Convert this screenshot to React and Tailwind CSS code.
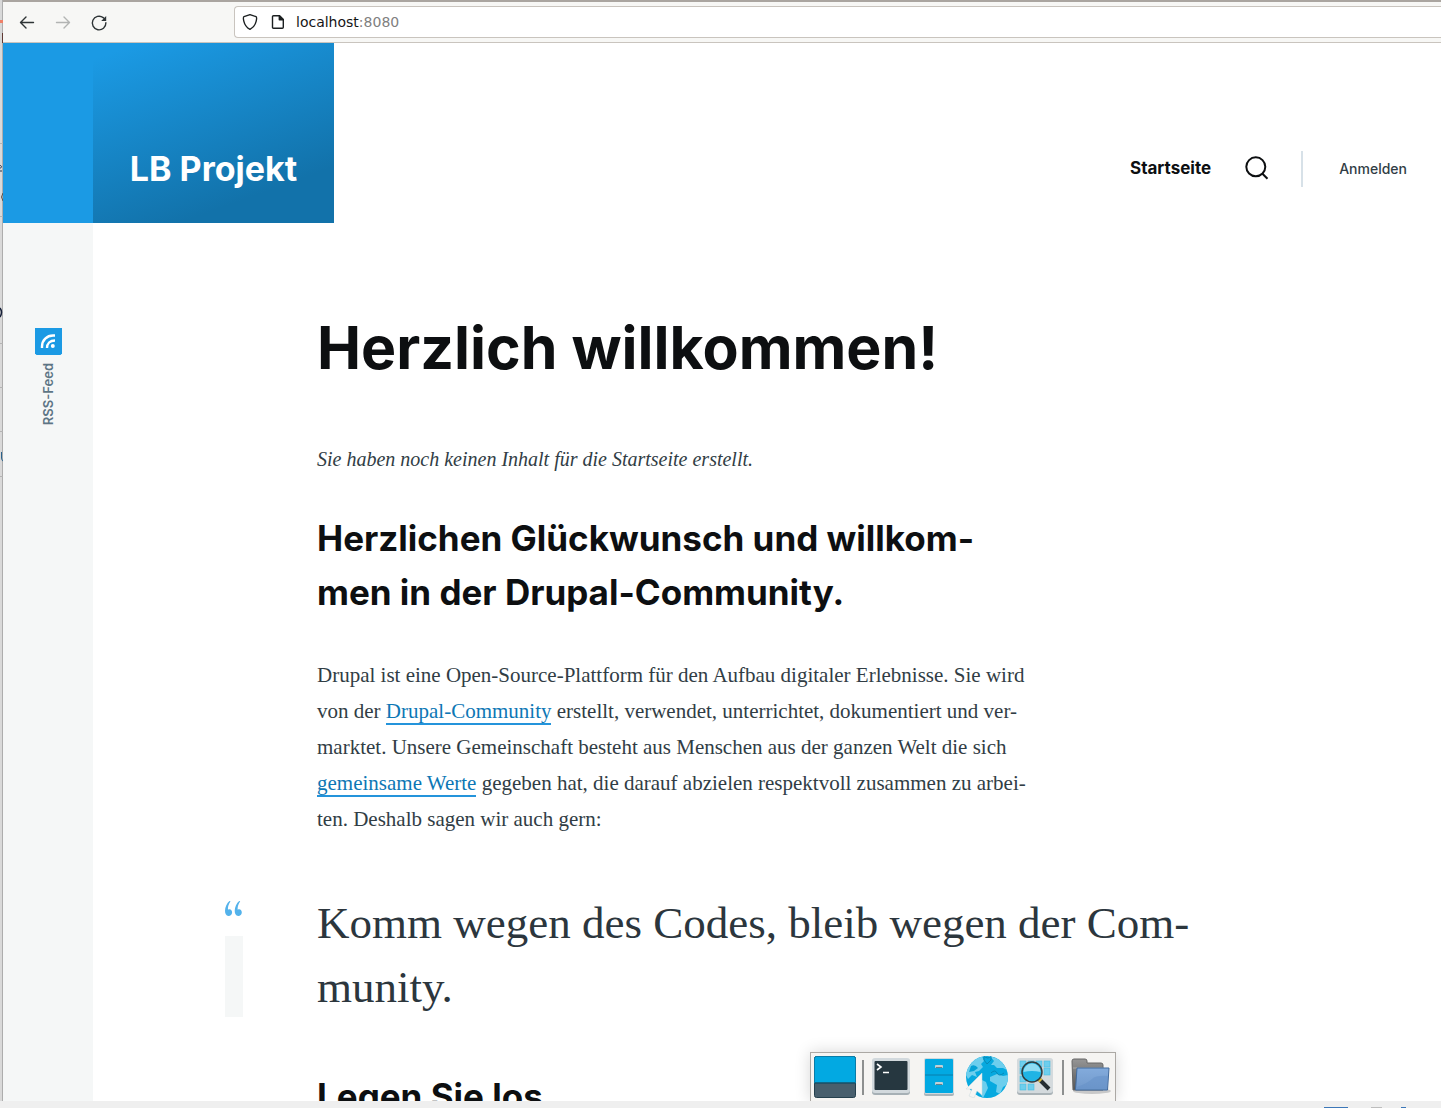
const sans = "font-['Inter','Open_Sans',sans-serif]";
const serif = "font-['Liberation_Serif','DejaVu_Serif',serif]";

function WindowEdge() {
  return (
    <div className="w-[3px] shrink-0 overflow-hidden bg-[#d9d9d9]" aria-hidden="true">
      <svg width="3" height="1108" viewBox="0 0 3 1108">
        <rect x="2" width="1" height="1108" fill="#adadad" />
        <rect y="20" width="3" height="3" fill="#ee8068" />
        <rect x="2" y="33" width="1" height="10" fill="#5f3933" />
        {[143, 216, 343, 387, 431, 476].map((y) => (
          <rect key={y} y={y} width="3" height="1" fill="#b4b4b4" />
        ))}
        <path d="M0 165.500C2 165.500 2 168 0 168M0 171H2" stroke="#25304a" fill="none" />
        <path d="M3 193Q0 197 3 201" stroke="#5c5148" fill="none" />
        <path d="M0 308Q3 312 0 317" stroke="#16213a" strokeWidth="1.500" fill="none" />
        <path d="M1.500 452V458Q2 461 3 461" stroke="#28628c" fill="none" />
      </svg>
    </div>
  );
}

function BrowserBar() {
  return (
    <div className="flex h-[43px] shrink-0 items-center border-t-2 border-b border-t-[#aaa5a0] border-b-[#c9c4be] bg-[#f7f7f5]">
      <div className="flex w-[231px] shrink-0 items-center gap-4 pl-[14px] text-[#2e3436]">
        <button type="button" aria-label="Zurück" className="flex size-5 items-center justify-center">
          <svg width="20" height="20" viewBox="0 0 20 20" fill="none" stroke="currentColor" strokeWidth="1.400" strokeLinecap="round" strokeLinejoin="round">
            <path d="M16.500 10.500H3.500M9 5L3.500 10.500L9 16" />
          </svg>
        </button>
        <button type="button" aria-label="Vor" className="flex size-5 items-center justify-center text-[#b2b4b3]">
          <svg width="20" height="20" viewBox="0 0 20 20" fill="none" stroke="currentColor" strokeWidth="1.400" strokeLinecap="round" strokeLinejoin="round">
            <path d="M3.500 10.500H16.500M11 5L16.500 10.500L11 16" />
          </svg>
        </button>
        <button type="button" aria-label="Neu laden" className="flex size-5 items-center justify-center">
          <svg width="20" height="20" viewBox="0 0 20 20" fill="none" stroke="currentColor" strokeWidth="1.400" strokeLinecap="round">
            <path d="M16.900 10.800A6.800 6.800 0 1 1 14.200 5.600L15.200 6.500" />
            <path d="M17.200 4V9H12.200Z" fill="currentColor" stroke="none" />
          </svg>
        </button>
      </div>
      <div className="flex h-8 min-w-0 flex-1 items-center rounded-l border border-r-0 border-[#c9c4be] bg-white pl-[7px]">
        <svg width="16" height="18" viewBox="0 0 16 18" fill="none" stroke="#1b1f20" strokeWidth="1.400" strokeLinejoin="round" className="shrink-0">
          <path d="M8 1.600L14 3.700C15 4.100 14.700 6 14.200 8.200C13.300 12 11.300 14.700 8 16.400C4.700 14.700 2.700 12 1.800 8.200C1.300 6 1 4.100 2 3.700Z" />
        </svg>
        <svg width="14" height="16" viewBox="0 0 14 16" fill="none" stroke="#1b1f20" strokeWidth="1.400" strokeLinejoin="round" className="ml-[13px] shrink-0">
          <path d="M2.500 1.700H8.500L12.300 5.500V13.300Q12.300 14.300 11.300 14.300H2.500Q1.500 14.300 1.500 13.300V2.700Q1.500 1.700 2.500 1.700Z" />
          <path d="M8.300 1.700V5.700H12.300Z" fill="#1b1f20" />
        </svg>
        <div className="relative ml-[11px] h-full min-w-0 flex-1 font-['DejaVu_Sans',sans-serif] text-sm text-[#808080]">
          <span className="pointer-events-none absolute inset-0 flex items-center" aria-hidden="true">
            <span className="text-[#151515]">localhost</span>:8080
          </span>
          <input aria-label="Adresse" defaultValue="localhost:8080" className="h-full w-full bg-transparent text-transparent caret-black outline-none" />
        </div>
      </div>
    </div>
  );
}

function Rail() {
  return (
    <aside className="flex w-[90px] shrink-0 flex-col bg-[#f5f7f7]">
      <div className="h-[180px] shrink-0 bg-[#1b9ae4]" />
      <a href="#rss" className={`${sans} mt-[105px] flex flex-col items-center gap-2 text-[13px] font-semibold text-[#5d7585]`}>
        <svg width="27" height="27" viewBox="0 0 27 27" aria-hidden="true">
          <path d="M0 0H27V25.500L25.500 27H1.500L0 25.500Z" fill="#1b9ae4" />
          <path d="M7 20V18.500C7 12 12 7.500 18 7.500H20M12 20C12 15.500 15 12.500 20 12.500" stroke="#fff" strokeWidth="2.400" fill="none" />
          <circle cx="17.800" cy="18" r="2" fill="#fff" />
        </svg>
        <span className="rotate-180 leading-4 [writing-mode:vertical-rl]">RSS-Feed</span>
      </a>
    </aside>
  );
}

function SiteHeader() {
  return (
    <header className={`${sans} flex h-[180px] shrink-0 justify-between`}>
      <div className="flex w-[241px] shrink-0 items-end justify-center bg-[linear-gradient(160deg,#1b9ae4_6%,#1272aa_79%)] pb-9">
        <a href="#home" className="text-[34px] leading-9 font-bold whitespace-nowrap text-white">LB Projekt</a>
      </div>
      <nav className="mb-9 flex h-9 items-center self-end pr-[34px]" aria-label="Hauptnavigation">
        <a href="#home" className="text-[17px] font-bold text-[#0d0f11]">Startseite</a>
        <button type="button" aria-label="Suche" className="ml-[34px]">
          <svg width="24" height="26" viewBox="0 0 24 26" fill="none" stroke="#0d0f11" strokeWidth="2">
            <circle cx="10.800" cy="10.800" r="9.500" />
            <path d="M17.200 17.500L22.500 22.800" />
          </svg>
        </button>
        <div className="ml-8 h-9 w-0.5 bg-[#d7e1e8]" />
        <a href="#login" className="ml-9 text-sm font-medium text-[#313d45]">Anmelden</a>
      </nav>
    </header>
  );
}

const link = "border-b-2 border-[#2494db] text-[#0d77b5]";

function Article() {
  return (
    <main className={`${serif} ml-56 pt-[89px] text-[21px] leading-9 whitespace-nowrap text-[#313d45]`}>
      <h1 className={`${sans} text-[59px] leading-[72px] font-bold text-[#0d0f11]`}>Herzlich willkommen!</h1>
      <p className="mt-[57px] text-[20px] italic">Sie haben noch keinen Inhalt für die Startseite erstellt.</p>
      <h2 className={`${sans} mt-[34px] text-[35px] leading-[54px] font-bold text-[#0d0f11]`}>
        Herzlichen Glückwunsch und willkom-<br />men in der Drupal-Community.
      </h2>
      <p className="mt-[38px]">
        Drupal ist eine Open-Source-Plattform für den Aufbau digitaler Erlebnisse. Sie wird<br />
        von der <a href="#community" className={link}>Drupal-Community</a> erstellt, verwendet, unterrichtet, dokumentiert und ver-<br />
        marktet. Unsere Gemeinschaft besteht aus Menschen aus der ganzen Welt die sich<br />
        <a href="#werte" className={link}>gemeinsame Werte</a> gegeben hat, die darauf abzielen respektvoll zusammen zu arbei-<br />
        ten. Deshalb sagen wir auch gern:
      </p>
      <div className="mt-[54px] -ml-[92px] flex gap-[74px]">
        <div className="flex w-[18px] shrink-0 flex-col pt-[10px]" aria-hidden="true">
          <svg width="18" height="15" viewBox="0 0 18 15" fill="#53b2eb">
            <path id="quote-mark" d="M5.500 .2C3.200 3.500 2.700 6.600 3 8.800C5 7.500 7.200 9 7.100 11.500C7 13.800 5.300 15 3.500 14.900C1 14.800 0 12.500 0 9.800C0 6 2 2 4.500 0Z" />
            <use href="#quote-mark" x="9.700" />
          </svg>
          <div className="mt-5 h-[81px] bg-[#f5f7f7]" />
        </div>
        <blockquote className="text-[45px] leading-[64px] text-[#2c363d]">
          Komm wegen des Codes, bleib wegen der Com-<br />munity.
        </blockquote>
      </div>
      <h2 className={`${sans} mt-[50px] text-[35px] leading-[54px] font-bold text-[#0d0f11]`}>Legen Sie los</h2>
    </main>
  );
}

function Dock() {
  const item = "flex h-[46px] items-center justify-center";
  return (
    <div className="absolute bottom-0 left-[807px] flex h-[49px] w-[306px] items-center border border-b-0 border-[#aba8a4] bg-[#f5f4f2] pl-[3px] shadow-[0_0_16px_rgba(0,0,0,0.16)]">
      <button type="button" aria-label="Desktop anzeigen" className={item}>
        <svg width="42" height="42" viewBox="0 0 42 42">
          <rect x=".5" y=".5" width="41" height="41" rx="2" fill="#485f6d" stroke="#25404d" />
          <path d="M.5 27V2.500Q.5 .5 2.500 .5H39.500Q41.500 .5 41.500 2.500V27Z" fill="#02a9e2" stroke="#087ca8" />
          <path d="M1 27H41" stroke="#203844" />
        </svg>
      </button>
      <div className="ml-[6px] h-[35px] w-0.5 bg-[#8d8f8f]" />
      <button type="button" aria-label="Terminal" className={`${item} ml-2`}>
        <svg width="38" height="38" viewBox="0 0 38 38">
          <rect y="1" width="38" height="36" rx="3" fill="#a6b0b5" />
          <rect width="38" height="35" rx="3" fill="#d2d9dd" />
          <rect x="2.500" y="3" width="33" height="29" rx="1" fill="#263740" />
          <path d="M5 6L9 9L5 12M11 14.500H17" stroke="#fff" strokeWidth="1.600" fill="none" />
        </svg>
      </button>
      <button type="button" aria-label="Dateien" className={`${item} ml-[14px]`}>
        <svg width="30" height="38" viewBox="0 0 30 38">
          <rect y="1" width="30" height="37" rx="2" fill="#a9b5bb" />
          <rect width="30" height="36" rx="2" fill="#d0d9dd" />
          <rect x="1" y="1" width="28" height="34" rx="1" fill="#02a9e2" />
          <path d="M1 17H29" stroke="#087fac" />
          <rect x="11" y="7" width="8" height="3" rx="1" fill="#c3d0d5" />
          <rect x="11" y="24" width="8" height="3" rx="1" fill="#c3d0d5" />
          <path d="M12 9.500H18M12 26.500H18" stroke="#65808b" />
        </svg>
      </button>
      <button type="button" aria-label="Webbrowser" className={`${item} ml-3`}>
        <svg width="42" height="42" viewBox="0 0 42 42">
          <defs><clipPath id="globe"><circle cx="21" cy="21" r="21" /></clipPath></defs>
          <g clipPath="url(#globe)">
            <rect width="42" height="42" fill="#06a9df" />
            <path d="M7 4L16 0L18 5L15 8L17 11L13 15L9 16L11 21L6 19L2 23L-1 17ZM24 0L35 4L41 14L37 12L31 12L28 9L25 9L28 5ZM24 21L31 18L37 20L42 19V28L37 31L34 38L30 36L31 29L24 25ZM12 22L20 26L22 32L17 42L12 34Z" fill="#6dceed" />
            <path d="M18 0Q22 4 25 0V4L21 8L18 4ZM25 17Q29 13 31 17T38 17" fill="none" stroke="#0788b5" />
            <path d="M5 10Q9 8 12 12L8 15L3 16" fill="#05a1d5" />
          </g>
          <path d="M16 17V39L11 35L8 42L3 40L6 33L0 33Z" fill="#f5f5f3" stroke="#cbd8dc" strokeWidth=".5" />
        </svg>
      </button>
      <button type="button" aria-label="Anwendungsfinder" className={`${item} ml-[9px]`}>
        <svg width="36" height="38" viewBox="0 0 36 38">
          <rect y="1" width="36" height="36" rx="3" fill="#aab3b7" />
          <rect width="36" height="35" rx="3" fill="#d4dadd" />
          <g fill="#6dceed" stroke="#45bce2" strokeWidth=".6">
            {[3, 11, 19, 27].map((x) => <rect key={x} x={x} y="3" width="6" height="6" />)}
            {[10, 18, 26].map((y) => <rect key={y} x="3" y={y} width="6" height="6" />)}
            <rect x="27" y="10" width="6" height="7" />
            <rect x="11" y="26" width="6" height="6" />
          </g>
          <path d="M23 22L32 31" stroke="#252d31" strokeWidth="4" />
          <path d="M22 21L24 23" stroke="#d5b63d" strokeWidth="4" />
          <circle cx="15" cy="14" r="10" fill="#20b4e5" stroke="#303b3e" strokeWidth="1.500" />
          <path d="M6.500 14A8.500 8.500 0 0 1 23.500 14Q15 12 6.500 14Z" fill="#8fdcf3" />
        </svg>
      </button>
      <div className="ml-[9px] h-[35px] w-0.5 bg-[#8d8f8f]" />
      <button type="button" aria-label="Ordner" className={`${item} ml-[7px]`}>
        <svg width="40" height="38" viewBox="0 0 40 38">
          <defs>
            <linearGradient id="folder" x2="0" y2="1"><stop stopColor="#83abdc" /><stop offset="1" stopColor="#7199cb" /></linearGradient>
            <linearGradient id="back" x2="0" y2="1"><stop stopColor="#969696" /><stop offset="1" stopColor="#555" /></linearGradient>
          </defs>
          <ellipse cx="21" cy="33" rx="19" ry="3" fill="#c8c8c8" />
          <path d="M1 3Q1 1 3 1H14Q16 1 16 3V5H30Q32 5 32 7V32H2Z" fill="url(#back)" stroke="#666" />
          <path d="M2 10H32" stroke="#aaa" />
          <path d="M6 10H38L36.500 32H4.500Z" fill="url(#folder)" stroke="#416a9d" strokeLinejoin="round" />
          <path d="M6 29Q17 25 21 21T37 18L36 31H6Z" fill="#648fc7" opacity=".5" />
        </svg>
      </button>
    </div>
  );
}

export default function App() {
  return (
    <div className="flex h-screen flex-col overflow-hidden bg-white">
      <div className="flex min-h-0 flex-1">
        <WindowEdge />
        <div className="relative flex min-w-0 flex-1 flex-col overflow-hidden">
          <BrowserBar />
          <div className="flex min-h-0 flex-1">
            <Rail />
            <div className="min-w-0 flex-1 overflow-hidden">
              <SiteHeader />
              <Article />
            </div>
          </div>
          <Dock />
        </div>
      </div>
      <div className="flex h-[7px] shrink-0 justify-end overflow-hidden bg-[#efefef] pt-[6px]" aria-hidden="true">
        <svg width="117" height="1" viewBox="0 0 117 1">
          <rect width="24" height="1" fill="#3c77b8" />
          <rect x="47" width="11" height="1" fill="#bdbdbd" />
          <rect x="77" width="5" height="1" fill="#3c77b8" />
        </svg>
      </div>
    </div>
  );
}
